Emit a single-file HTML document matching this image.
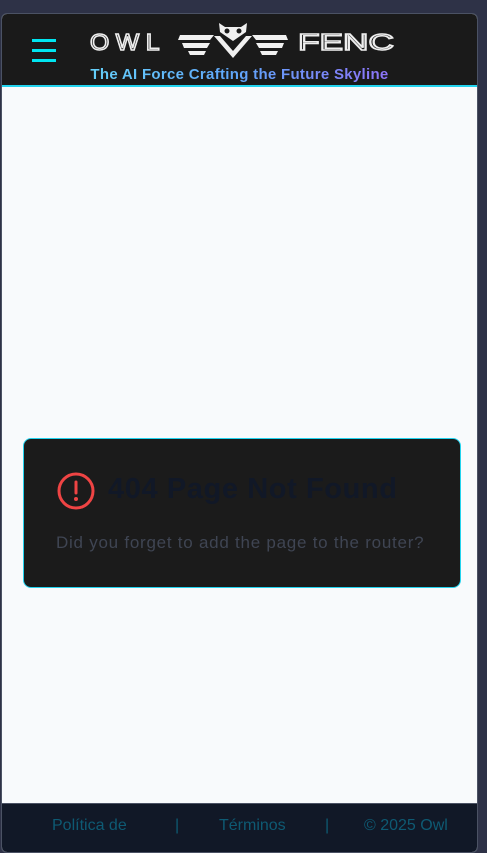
<!DOCTYPE html>
<html><head><meta charset="utf-8"><style>
*{margin:0;padding:0;box-sizing:border-box}
body{width:487px;height:836px;background:#2e3247;position:relative;overflow:hidden;font-family:"Liberation Sans",sans-serif}
.frame{position:absolute;left:1px;top:13px;width:477px;height:840px;border:1px solid #4b5264;border-radius:6px;background:#f8fafc;overflow:hidden}
.hdr{position:absolute;left:0;top:0;width:100%;height:73px;background:#1a1a1a;border-bottom:2px solid #22d3ee}
.burger{position:absolute;left:30px;top:25px;width:24px}
.burger i{display:block;height:3px;background:#00e5f0;margin-bottom:7px}
.sub{position:absolute;left:0;width:100%;top:52px;text-align:center;font-size:15px;letter-spacing:0.3px;font-weight:bold;background:linear-gradient(90deg,#67e8f9,#60a5fa 50%,#a855f7);-webkit-background-clip:text;background-clip:text;color:transparent}
.card{position:absolute;left:21px;top:424px;width:438px;height:150px;background:#1b1b1b;border:1.5px solid #22d3ee;border-radius:8px}
.title{position:absolute;left:84px;top:34px;font-size:29px;letter-spacing:0.6px;font-weight:bold;color:#111827}
.txt{position:absolute;left:32px;top:94px;font-size:17px;letter-spacing:0.75px;color:#3f4553}
.ftr{position:absolute;left:0;top:789px;width:100%;height:60px;background:#111827;border-top:1px solid #4b5264}
.ftr span{position:absolute;top:13px;font-size:16px;color:#0e5a73}
</style></head><body>
<div class="frame">
 <div class="hdr">
  <div class="burger"><i></i><i></i><i></i></div>
  <svg style="position:absolute;left:0;top:0" width="477" height="50">
   <text x="88" y="36" font-family="Liberation Sans" font-size="23" letter-spacing="6" fill="none" stroke="#eee" stroke-width="1.5" textLength="76" lengthAdjust="spacingAndGlyphs">OWL</text>
   <g fill="#f0f0f0">
    <polygon points="178,21 212,21 208,26 176,26"/>
    <polygon points="180,29 208,29 205,34 182,34"/>
    <polygon points="186,37 204,37 202,41 188,41"/>
    <polygon points="284,21 250,21 254,26 286,26"/>
    <polygon points="282,29 254,29 257,34 280,34"/>
    <polygon points="276,37 258,37 260,41 274,41"/>
    <polygon points="212,22 231,44 250,22 244,22 231,37 218,22"/>
    <path d="M217,9 L223,13 L239,13 L245,9 L244,18 L231,27 L218,18Z"/>
   </g>
   <circle cx="225" cy="17" r="2.5" fill="#1a1a1a"/><circle cx="237" cy="17" r="2.5" fill="#1a1a1a"/>
   <text x="296" y="36" font-family="Liberation Sans" font-size="23" fill="none" stroke="#eee" stroke-width="1.5" textLength="96" lengthAdjust="spacingAndGlyphs">FENC</text>
  </svg>
  <div class="sub">The AI Force Crafting the Future Skyline</div>
 </div>
 <div class="card">
  <svg style="position:absolute;left:32px;top:33px" width="40" height="40" viewBox="0 0 40 40"><circle cx="20" cy="19" r="17" fill="none" stroke="#ef4444" stroke-width="3"/><line x1="20" y1="10" x2="20" y2="21" stroke="#ef4444" stroke-width="3" stroke-linecap="round"/><circle cx="20" cy="27" r="2" fill="#ef4444"/></svg>
  <div class="title">404 Page Not Found</div>
  <div class="txt">Did you forget to add the page to the router?</div>
 </div>
 <div class="ftr">
  <span style="left:50px">Política de</span>
  <span style="left:173px">|</span>
  <span style="left:217px">Términos</span>
  <span style="left:323px">|</span>
  <span style="left:362px">© 2025 Owl</span>
 </div>
</div>
</body></html>
